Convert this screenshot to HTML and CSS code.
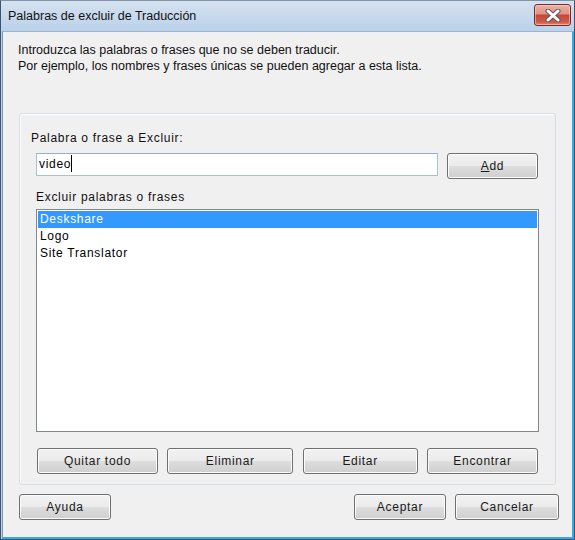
FILE: index.html
```html
<!DOCTYPE html>
<html>
<head>
<meta charset="utf-8">
<link rel="stylesheet" href="styles.css">
</head>
<body>
<div class="window">
  <div class="titlebar">
    <span class="title">Palabras de excluir de Traducción</span>
    <div class="close">
      <svg width="16" height="13" viewBox="0 0 16 13">
        <path d="M3 2 L13 11 M13 2 L3 11" stroke="#5a5a5a" stroke-width="5" stroke-linecap="round"/>
        <path d="M3 2 L13 11 M13 2 L3 11" stroke="#ffffff" stroke-width="3" stroke-linecap="round"/>
      </svg>
    </div>
  </div>
  <div class="client">
    <p class="intro">Introduzca las palabras o frases que no se deben traducir.<br>Por ejemplo, los nombres y frases únicas se pueden agregar a esta lista.</p>
    <div class="group">
      <div class="label first">Palabra o frase a Excluir:</div>
      <div class="row">
        <div class="input">video<span class="caret"></span></div>
        <button class="btn add"><u>A</u>dd</button>
      </div>
      <div class="label second">Excluir palabras o frases</div>
      <div class="list">
        <div class="item sel">Deskshare</div>
        <div class="item">Logo</div>
        <div class="item">Site Translator</div>
      </div>
      <div class="btnrow">
        <button class="btn w-quitar">Quitar todo</button>
        <button class="btn w-elim">Eliminar</button>
        <button class="btn w-editar">Editar</button>
        <button class="btn w-enc">Encontrar</button>
      </div>
    </div>
    <div class="footer">
      <button class="btn w-ayuda">Ayuda</button>
      <div class="spacer"></div>
      <button class="btn w-aceptar">Aceptar</button>
      <button class="btn w-cancelar">Cancelar</button>
    </div>
  </div>
</div>
</body>
</html>
```
FILE: styles.css
```css
html, body {
  margin: 0;
  padding: 0;
}
body {
  width: 575px;
  height: 540px;
  overflow: hidden;
  font-family: "Liberation Sans", Arial, sans-serif;
  color: #000;
}
.window {
  box-sizing: border-box;
  width: 575px;
  height: 540px;
  border: 1px solid #3a5474;
  border-top-color: #8193ab;
  background: linear-gradient(#d5e2f0, #bad1ea 30px, #bad1ea);
  display: flex;
  flex-direction: column;
}
.titlebar {
  height: 30px;
  flex: none;
  display: flex;
  justify-content: space-between;
  align-items: flex-start;
  padding: 0 3px 0 7px;
}
.title {
  font-size: 12.5px;
  line-height: 31px;
  color: #111;
}
.close {
  margin-top: 3px;
  box-sizing: border-box;
  width: 37px;
  height: 22px;
  border: 1px solid #7a2a22;
  border-radius: 3px;
  background: linear-gradient(#eab1a6 0%, #de9284 45%, #c6473a 50%, #cf5a48 85%, #e08a73 100%);
  box-shadow: inset 0 0 0 1px rgba(255, 220, 210, 0.5);
  display: flex;
  align-items: center;
  justify-content: center;
}
.client {
  flex: 1;
  margin: 0 0 0 1px;
  background: #f0f0f0;
  border-left: 1px solid #8299b6;
  border-top: 1px solid #9fb3cc;
  border-right: 2px solid #34aae8;
  border-bottom: 2px solid #34aae8;
  display: flex;
  flex-direction: column;
}
.intro {
  margin: 10px 0 0 15px;
  font-size: 12.5px;
  line-height: 16px;
  color: #111;
}
.group {
  margin: 39px 0 0 16px;
  width: 537px;
  box-sizing: border-box;
  border: 1px solid #d5dfe5;
  border-radius: 3px;
  box-shadow: inset 1px 1px 0 #ffffff;
  padding: 16px 16px 10px 16px;
}
.label {
  font-size: 12px;
  letter-spacing: 0.7px;
  line-height: 16px;
  color: #111;
}
.label.first {
  margin-left: -5px;
}
.label.second {
  margin-top: 10px;
  margin-bottom: 4px;
}
.row {
  margin-top: 7px;
  display: flex;
  align-items: flex-start;
  gap: 9px;
}
.input {
  flex: 1;
  box-sizing: border-box;
  height: 23px;
  border: 1px solid #a9bfda;
  border-top-color: #94afd2;
  background: #fff;
  padding: 0 2px;
  font-size: 12px;
  letter-spacing: 0.7px;
  line-height: 21px;
}
.caret {
  display: inline-block;
  width: 1px;
  height: 17px;
  background: #000;
  vertical-align: -4px;
  margin-left: -0.5px;
}
.btn {
  box-sizing: border-box;
  height: 26px;
  padding: 0;
  margin: 0;
  border: 1px solid #707070;
  border-radius: 3px;
  background: linear-gradient(#f2f2f2 0%, #ebebeb 48%, #dddddd 52%, #cfcfcf 100%);
  box-shadow: inset 0 0 0 1px #fbfbfb;
  font-family: "Liberation Sans", Arial, sans-serif;
  font-size: 12px;
  font-weight: 400;
  letter-spacing: 0.7px;
  line-height: 24px;
  color: #1a1a1a;
  text-align: center;
}
.btn u {
  text-decoration: underline;
}
.add {
  width: 91px;
  margin-right: 1px;
}
.list {
  box-sizing: border-box;
  height: 223px;
  border: 1px solid #828790;
  background: #fff;
  padding: 1px;
}
.item {
  height: 17px;
  line-height: 17px;
  padding-left: 2px;
  font-size: 12px;
  letter-spacing: 0.7px;
}
.item.sel {
  background: #3399ff;
  color: #fff;
}
.btnrow {
  margin-top: 16px;
  display: flex;
  justify-content: space-between;
  padding: 0 1px;
}
.w-quitar { width: 121px; }
.w-elim { width: 126px; }
.w-editar { width: 115px; }
.w-enc { width: 111px; }
.footer {
  margin-top: 9px;
  display: flex;
  padding: 0 13px 0 16px;
  gap: 9px;
}
.spacer {
  flex: 1;
}
.w-ayuda { width: 92px; }
.w-aceptar { width: 92px; }
.w-cancelar { width: 104px; }
```
